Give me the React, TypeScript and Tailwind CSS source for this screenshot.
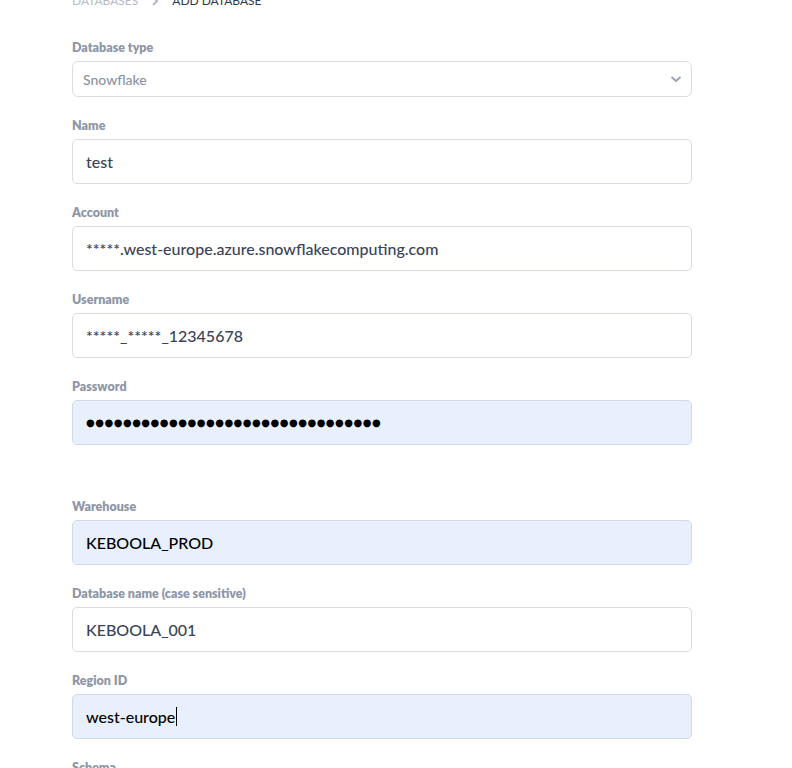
const font = { fontFamily: 'Lato, "Noto Sans", sans-serif' };

function Label({ children }: { children: React.ReactNode }) {
  return <div className="mb-[5px] text-[12.5px] font-extrabold leading-4 text-[#8e96a7]">{children}</div>;
}

function Field({
  label,
  children,
  filled = false,
  className = '',
}: {
  label: string;
  children: React.ReactNode;
  filled?: boolean;
  className?: string;
}) {
  return (
    <div className={className}>
      <Label>{label}</Label>
      <div
        className={`flex h-[45px] items-center rounded-[5px] border pl-[13px] text-[16px] font-medium ${
          filled ? 'border-[#d3d9e2] bg-[#e8f0fe] text-black' : 'border-[#d9dde3] bg-white text-[#3a4358]'
        }`}
      >
        {children}
      </div>
    </div>
  );
}

export default function App() {
  return (
    <div className="min-h-screen overflow-hidden bg-white" style={font}>
      <div className="w-[620px] ml-[72px]">
        <div className="-mt-[7px] flex items-center text-[12px] leading-4 uppercase">
          <span className="text-[#b4bac6]">Databases</span>
          <svg className="mx-[11px] h-3 w-3 text-[#b4bac6]" viewBox="0 0 12 12" fill="none" stroke="currentColor" strokeWidth={2}>
            <path d="M4 2l4 4-4 4" />
          </svg>
          <span className="text-[#2f3a4f]">Add database</span>
        </div>

        <div className="mt-[31px]">
          <Label>Database type</Label>
          <div className="flex h-[36px] items-center justify-between rounded-[6px] border border-[#d9dde3] bg-white pl-[10px] pr-[9px] text-[14px] font-medium text-[#8a93a5]">
            <span>Snowflake</span>
            <svg className="h-3 w-3 text-[#9aa1ae]" viewBox="0 0 12 12" fill="none" stroke="currentColor" strokeWidth={1.8}>
              <path d="M1.5 4l4.5 4 4.5-4" />
            </svg>
          </div>
        </div>

        <Field label="Name" className="mt-[21px]">test</Field>
        <Field label="Account" className="mt-[21px]">*****.west-europe.azure.snowflakecomputing.com</Field>
        <Field label="Username" className="mt-[21px]">*****_*****_12345678</Field>
        <Field label="Password" filled className="mt-[21px]">
          <span className="text-[10px] tracking-[0.5px]" style={{ fontFamily: '"DejaVu Sans", sans-serif' }}>
            {'●'.repeat(32)}
          </span>
        </Field>

        <Field label="Warehouse" filled className="mt-[54px]">KEBOOLA_PROD</Field>
        <Field label="Database name (case sensitive)" className="mt-[21px]">KEBOOLA_001</Field>
        <Field label="Region ID" filled className="mt-[21px]">
          west-europe
          <span className="ml-px inline-block h-[19px] w-px bg-black" />
        </Field>

        <div className="mt-[21px]">
          <Label>Schema</Label>
        </div>
      </div>
    </div>
  );
}
